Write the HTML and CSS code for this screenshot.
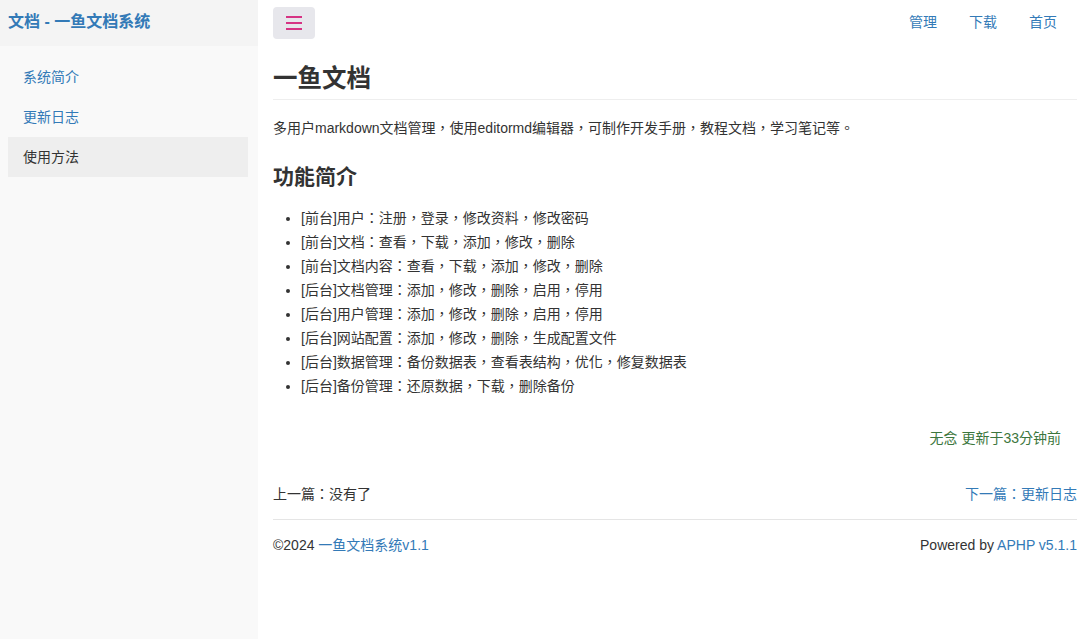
FILE: index.html
```html
<!DOCTYPE html>
<html lang="zh-TW">
<head>
<meta charset="utf-8">
<title>一鱼文档</title>
<link rel="stylesheet" href="styles.css">
</head>
<body>
<div class="layout">
  <aside class="sidebar">
    <div class="brand"><a href="#">文档 - 一鱼文档系统</a></div>
    <ul class="side-nav">
      <li><a href="#">系统简介</a></li>
      <li><a href="#">更新日志</a></li>
      <li class="active"><a href="#">使用方法</a></li>
    </ul>
  </aside>
  <main class="main">
    <div class="topbar">
      <button class="toggle" type="button" aria-label="menu">
        <span class="bar"></span><span class="bar"></span><span class="bar"></span>
      </button>
      <nav class="top-nav">
        <a href="#">管理</a>
        <a href="#">下载</a>
        <a href="#">首页</a>
      </nav>
    </div>
    <article class="doc">
      <h1>一鱼文档</h1>
      <p>多用户markdown文档管理，使用editormd编辑器，可制作开发手册，教程文档，学习笔记等。</p>
      <h2>功能简介</h2>
      <ul class="features">
        <li>[前台]用户：注册，登录，修改资料，修改密码</li>
        <li>[前台]文档：查看，下载，添加，修改，删除</li>
        <li>[前台]文档内容：查看，下载，添加，修改，删除</li>
        <li>[后台]文档管理：添加，修改，删除，启用，停用</li>
        <li>[后台]用户管理：添加，修改，删除，启用，停用</li>
        <li>[后台]网站配置：添加，修改，删除，生成配置文件</li>
        <li>[后台]数据管理：备份数据表，查看表结构，优化，修复数据表</li>
        <li>[后台]备份管理：还原数据，下载，删除备份</li>
      </ul>
      <div class="meta">无念 更新于33分钟前</div>
    </article>
    <div class="pager">
      <span>上一篇：没有了</span>
      <a href="#">下一篇：更新日志</a>
    </div>
    <footer class="footer">
      <span>©2024 <a href="#">一鱼文档系统v1.1</a></span>
      <span>Powered by <a href="#">APHP v5.1.1</a></span>
    </footer>
  </main>
</div>
</body>
</html>
```

FILE: styles.css
```css
* { box-sizing: border-box; }
html, body { margin: 0; padding: 0; height: 100%; }
body {
  font-family: "Liberation Sans", Arial, "Noto Sans CJK TC", "Noto Sans CJK SC", sans-serif;
  font-size: 14px;
  line-height: 1.42857;
  color: #333;
  background: #fff;
}
a { color: #337ab7; text-decoration: none; }

.layout { display: flex; min-height: 639px; }

.sidebar {
  width: 258px;
  flex: 0 0 258px;
  background: #f9f9f9;
}
.brand {
  height: 46px;
  background: #f4f4f4;
  display: flex;
  align-items: center;
  padding: 0 8px 2px;
}
.brand a {
  font-size: 16px;
  font-weight: bold;
  color: #337ab7;
}
.side-nav {
  list-style: none;
  margin: 0;
  padding: 11px 10px 0 8px;
}
.side-nav li a {
  display: block;
  height: 40px;
  line-height: 40px;
  padding: 0 15px;
  font-size: 14px;
}
.side-nav li.active a {
  background: #eee;
  color: #333;
}

.main {
  flex: 1;
  padding: 0 10px 0 15px;
  min-width: 0;
}
.topbar {
  display: flex;
  justify-content: space-between;
  align-items: flex-start;
  height: 46px;
  padding-top: 7px;
}
.toggle {
  width: 42px;
  height: 32px;
  border: none;
  border-radius: 4px;
  background: #e7e7ec;
  display: flex;
  flex-direction: column;
  align-items: center;
  justify-content: center;
  gap: 4px;
  padding: 0;
  cursor: pointer;
}
.toggle .bar {
  display: block;
  width: 16px;
  height: 2px;
  background: #d63384;
}
.top-nav {
  display: flex;
  padding-right: 4px;
  margin-top: -7px;
}
.top-nav a {
  display: block;
  line-height: 44px;
  padding: 0 16px;
}

.doc h1 {
  font-size: 24.5px;
  font-weight: bold;
  line-height: 1.2;
  margin: 18px 0 0;
  padding-bottom: 6px;
  border-bottom: 1px solid #eee;
}
.doc p {
  margin: 19px 0 0;
}
.doc h2 {
  font-size: 21px;
  font-weight: bold;
  line-height: 1.2;
  margin: 25px 0 0;
}
.features {
  margin: 16px 0 0;
  padding-left: 28px;
  line-height: 24px;
}
.meta {
  text-align: right;
  color: #3c763d;
  padding-right: 16px;
  margin-top: 31px;
}

.pager {
  display: flex;
  justify-content: space-between;
  margin-top: 36px;
  padding-bottom: 14px;
  border-bottom: 1px solid #e5e5e5;
}
.footer {
  display: flex;
  justify-content: space-between;
  padding-top: 16px;
}
```
